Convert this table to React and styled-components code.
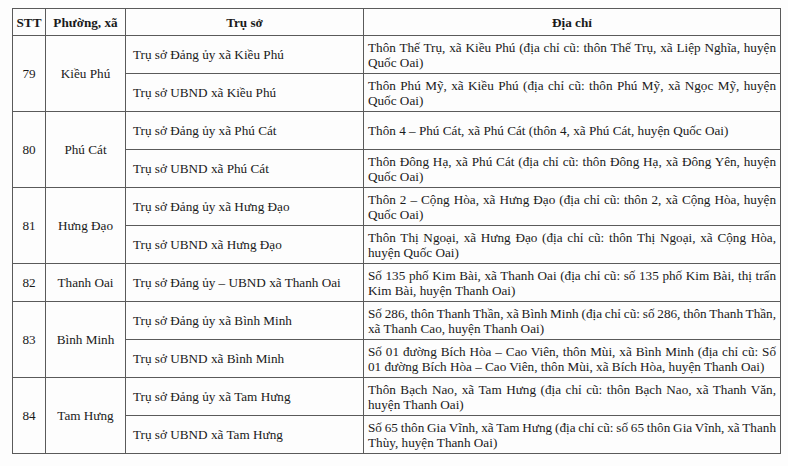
import React from 'react';
import styled, { createGlobalStyle } from 'styled-components';

const GlobalStyle = createGlobalStyle`
  html, body {
    margin: 0;
    padding: 0;
    background: #fdfdfd;
  }
  body {
    font-family: "Liberation Serif", "Times New Roman", serif;
    color: #1a1a1a;
  }
`;

const Page = styled.div`
  width: 788px;
  height: 466px;
  padding: 8px 0 0 12px;
  box-sizing: border-box;
`;

const Table = styled.table`
  width: 768px;
  border-collapse: collapse;
  table-layout: fixed;
  font-size: 13.2px;
  line-height: 15px;
`;

const HeadCell = styled.th`
  height: 26px;
  padding: 0;
  border: 1px solid #5a5a5a;
  font-weight: bold;
  text-align: center;
  vertical-align: middle;
`;

const Cell = styled.td`
  height: 37px;
  padding: 0 ${(p) => p.$pad || 0}px;
  border: 1px solid #5a5a5a;
  vertical-align: middle;
  text-align: ${(p) => (p.$center ? 'center' : 'left')};
`;

// each address line is justified to the column width, the last one is not
const Line = styled.div`
  text-align: justify;
  text-align-last: ${(p) => (p.$last ? 'left' : 'justify')};
  white-space: nowrap;
  word-spacing: ${(p) => (p.$last ? '0' : '-1px')};
`;

const data = [
  {
    stt: 79,
    name: 'Kiều Phú',
    rows: [
      ['Trụ sở Đảng ủy xã Kiều Phú', ['Thôn Thế Trụ, xã Kiều Phú (địa chỉ cũ: thôn Thế Trụ, xã Liệp Nghĩa, huyện', 'Quốc Oai)']],
      ['Trụ sở UBND xã Kiều Phú', ['Thôn Phú Mỹ, xã Kiều Phú (địa chỉ cũ: thôn Phú Mỹ, xã Ngọc Mỹ, huyện', 'Quốc Oai)']],
    ],
  },
  {
    stt: 80,
    name: 'Phú Cát',
    rows: [
      ['Trụ sở Đảng ủy xã Phú Cát', ['Thôn 4 – Phú Cát, xã Phú Cát (thôn 4, xã Phú Cát, huyện Quốc Oai)']],
      ['Trụ sở UBND xã Phú Cát', ['Thôn Đông Hạ, xã Phú Cát (địa chỉ cũ: thôn Đông Hạ, xã Đông Yên, huyện', 'Quốc Oai)']],
    ],
  },
  {
    stt: 81,
    name: 'Hưng Đạo',
    rows: [
      ['Trụ sở Đảng ủy xã Hưng Đạo', ['Thôn 2 – Cộng Hòa, xã Hưng Đạo (địa chỉ cũ: thôn 2, xã Cộng Hòa, huyện', 'Quốc Oai)']],
      ['Trụ sở UBND xã Hưng Đạo', ['Thôn Thị Ngoại, xã Hưng Đạo (địa chỉ cũ: thôn Thị Ngoại, xã Cộng Hòa,', 'huyện Quốc Oai)']],
    ],
  },
  {
    stt: 82,
    name: 'Thanh Oai',
    rows: [
      ['Trụ sở Đảng ủy – UBND xã Thanh Oai', ['Số 135 phố Kim Bài, xã Thanh Oai (địa chỉ cũ: số 135 phố Kim Bài, thị trấn', 'Kim Bài, huyện Thanh Oai)']],
    ],
  },
  {
    stt: 83,
    name: 'Bình Minh',
    rows: [
      ['Trụ sở Đảng ủy xã Bình Minh', ['Số 286, thôn Thanh Thần, xã Bình Minh (địa chỉ cũ: số 286, thôn Thanh Thần,', 'xã Thanh Cao, huyện Thanh Oai)']],
      ['Trụ sở UBND xã Bình Minh', ['Số 01 đường Bích Hòa – Cao Viên, thôn Mùi, xã Bình Minh (địa chỉ cũ: Số', '01 đường Bích Hòa – Cao Viên, thôn Mùi, xã Bích Hòa, huyện Thanh Oai)']],
    ],
  },
  {
    stt: 84,
    name: 'Tam Hưng',
    rows: [
      ['Trụ sở Đảng ủy xã Tam Hưng', ['Thôn Bạch Nao, xã Tam Hưng (địa chỉ cũ: thôn Bạch Nao, xã Thanh Văn,', 'huyện Thanh Oai)']],
      ['Trụ sở UBND xã Tam Hưng', ['Số 65 thôn Gia Vĩnh, xã Tam Hưng (địa chỉ cũ: số 65 thôn Gia Vĩnh, xã Thanh', 'Thùy, huyện Thanh Oai)']],
    ],
  },
];

export default function App() {
  return (
    <Page>
      <GlobalStyle />
      <Table>
        <colgroup>
          <col style={{ width: 33 }} />
          <col style={{ width: 80 }} />
          <col style={{ width: 238 }} />
          <col style={{ width: 417 }} />
        </colgroup>
        <thead>
          <tr>
            <HeadCell>STT</HeadCell>
            <HeadCell>Phường, xã</HeadCell>
            <HeadCell>Trụ sở</HeadCell>
            <HeadCell>Địa chỉ</HeadCell>
          </tr>
        </thead>
        <tbody>
          {data.map((g) =>
            g.rows.map(([office, lines], i) => (
              <tr key={`${g.stt}-${i}`}>
                {i === 0 && (
                  <>
                    <Cell rowSpan={g.rows.length} $center>{g.stt}</Cell>
                    <Cell rowSpan={g.rows.length} $center>{g.name}</Cell>
                  </>
                )}
                <Cell $pad={7}>{office}</Cell>
                <Cell $pad={4}>
                  {lines.map((l, j) => (
                    <Line key={j} $last={j === lines.length - 1}>{l}</Line>
                  ))}
                </Cell>
              </tr>
            ))
          )}
        </tbody>
      </Table>
    </Page>
  );
}
